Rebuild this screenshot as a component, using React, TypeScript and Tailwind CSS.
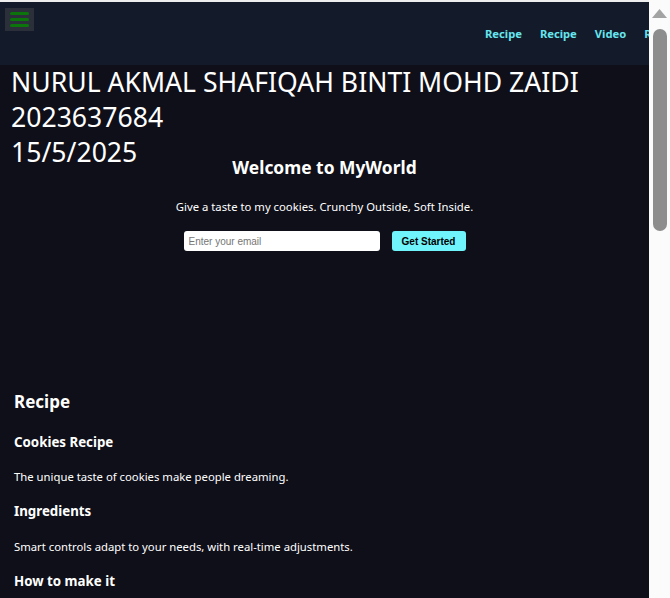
import React from 'react';

const navLinks = ['Recipe', 'Recipe', 'Video', 'Recipe', 'Video'];

function Hamburger() {
  return (
    <button className="mt-[6px] ml-[5px] flex h-[23px] w-[29px] shrink-0 flex-col items-center justify-center gap-[3px] bg-[#2a2f3a]">
      <span className="h-[3px] w-[19px] rounded-full bg-[#0b750b]" />
      <span className="h-[3px] w-[19px] rounded-full bg-[#0b750b]" />
      <span className="h-[3px] w-[19px] rounded-full bg-[#0b750b]" />
    </button>
  );
}

function FakeScrollbar() {
  return (
    <div className="flex h-full w-[21px] shrink-0 flex-col items-center bg-[#fbfbfb]">
      <svg width="15" height="10" viewBox="0 0 15 10" className="mt-[9px]">
        <polygon points="7.5,0 15,9 0,9" fill="#a3a3a3" />
      </svg>
      <div className="mt-[10px] h-[202px] w-[14px] rounded-full bg-[#8d8d8d]" />
    </div>
  );
}

export default function App() {
  return (
    <div className="flex h-[598px] w-[670px] overflow-hidden bg-white">
      <div className="relative flex h-full w-[649px] shrink-0 flex-col overflow-hidden bg-[#0f0f19] font-['Noto_Sans',sans-serif] text-white">
        <div className="h-[2px] shrink-0 bg-[#eeeeee]" />
        <header className="flex h-[63px] shrink-0 items-start bg-[#131a2a]">
          <Hamburger />
          <nav className="ml-[451px] flex h-full shrink-0 items-center gap-[18px] pt-[2px]">
            {navLinks.map((l, i) => (
              <a key={i} href="#" className="text-[11.2px] font-bold text-[#66e6ee]">
                {l}
              </a>
            ))}
          </nav>
        </header>

        <div className="absolute left-[11px] top-[65px] text-[26.6px] leading-[35px]">
          <p>NURUL AKMAL SHAFIQAH BINTI MOHD ZAIDI</p>
          <p>2023637684</p>
          <p>15/5/2025</p>
        </div>

        <section className="flex flex-col items-center pt-[90px]">
          <h1 className="text-[17.4px] font-bold leading-[24px]">Welcome to MyWorld</h1>
          <p className="mt-[19px] text-[11.3px] leading-[18px]">
            Give a taste to my cookies. Crunchy Outside, Soft Inside.
          </p>
          <form className="mt-[15px] flex gap-[12px]">
            <input
              type="email"
              placeholder="Enter your email"
              className="h-[20px] w-[196px] rounded-[3px] bg-white px-[5px] font-['Liberation_Sans',sans-serif] text-[10px] text-black placeholder:text-[#757575] outline-none"
            />
            <button
              type="button"
              className="h-[20px] w-[74px] rounded-[3px] bg-[#6ff4fb] font-['Liberation_Sans',sans-serif] text-[10px] font-bold text-black"
            >
              Get Started
            </button>
          </form>
        </section>

        <section className="mt-[139px] px-[14px]">
          <h2 className="text-[17px] font-bold leading-[24px]">Recipe</h2>
          <h3 className="mt-[18px] text-[13.3px] font-bold leading-[20px]">Cookies Recipe</h3>
          <p className="mt-[16px] text-[11.3px] leading-[18px]">The unique taste of cookies make people dreaming.</p>
          <h3 className="mt-[15px] text-[13.3px] font-bold leading-[20px]">Ingredients</h3>
          <p className="mt-[17px] text-[11.3px] leading-[18px]">
            Smart controls adapt to your needs, with real-time adjustments.
          </p>
          <h3 className="mt-[15px] text-[13.3px] font-bold leading-[20px]">How to make it</h3>
        </section>
      </div>
      <FakeScrollbar />
    </div>
  );
}
